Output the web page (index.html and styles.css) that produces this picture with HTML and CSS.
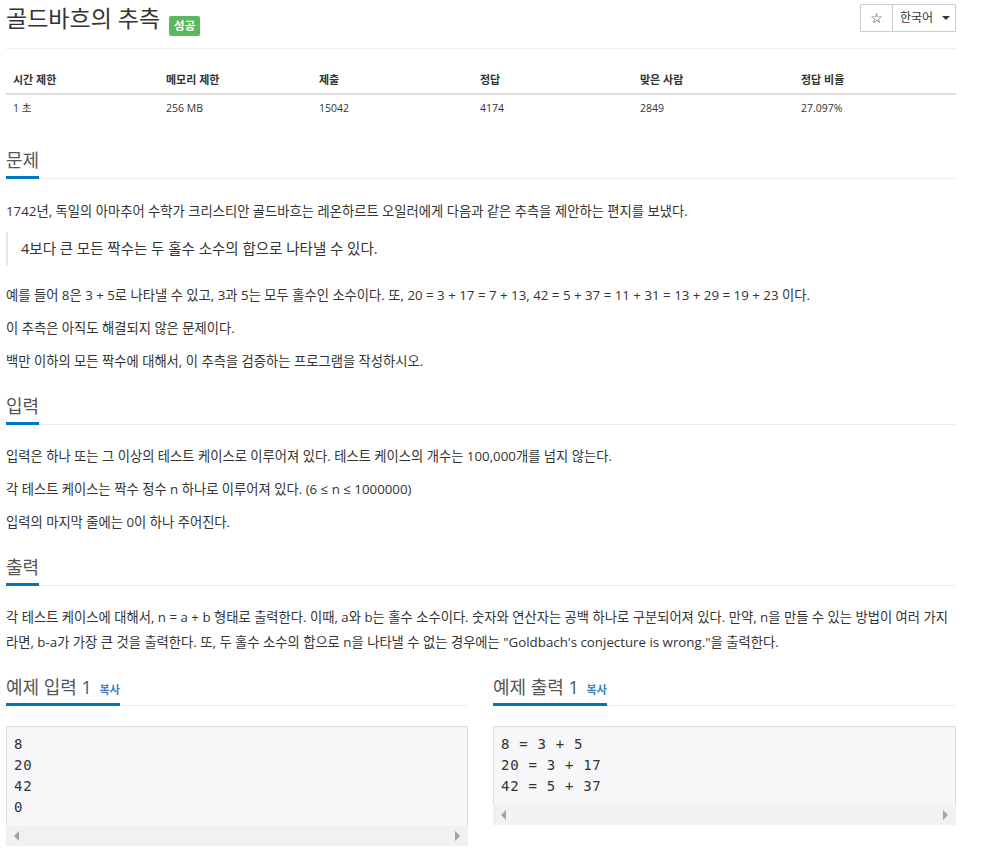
FILE: index.html
```html
<!DOCTYPE html>
<html lang="ko">
<head>
<meta charset="utf-8">
<title>골드바흐의 추측</title>
<link rel="stylesheet" href="styles.css">
</head>
<body>
<div class="page">
  <header class="page-header">
    <h1 class="title">골드바흐의 추측 <span class="badge">성공</span></h1>
    <div class="btn-group">
      <button class="btn btn-star" type="button">☆</button>
      <button class="btn btn-lang" type="button">한국어 <span class="caret"></span></button>
    </div>
  </header>

  <table class="info">
    <colgroup>
      <col class="w1"><col class="w2"><col class="w3"><col class="w4"><col class="w5"><col class="w6">
    </colgroup>
    <thead>
      <tr><th>시간 제한</th><th>메모리 제한</th><th>제출</th><th>정답</th><th>맞은 사람</th><th>정답 비율</th></tr>
    </thead>
    <tbody>
      <tr><td>1 초</td><td>256 MB</td><td>15042</td><td>4174</td><td>2849</td><td>27.097%</td></tr>
    </tbody>
  </table>

  <section class="section first">
    <div class="headline"><h2>문제</h2></div>
    <div class="desc">
      <p>1742년, 독일의 아마추어 수학가 크리스티안 골드바흐는 레온하르트 오일러에게 다음과 같은 추측을 제안하는 편지를 보냈다.</p>
      <blockquote>4보다 큰 모든 짝수는 두 홀수 소수의 합으로 나타낼 수 있다.</blockquote>
      <p>예를 들어 8은 3 + 5로 나타낼 수 있고, 3과 5는 모두 홀수인 소수이다. 또, 20 = 3 + 17 = 7 + 13, 42 = 5 + 37 = 11 + 31 = 13 + 29 = 19 + 23 이다.</p>
      <p>이 추측은 아직도 해결되지 않은 문제이다.</p>
      <p>백만 이하의 모든 짝수에 대해서, 이 추측을 검증하는 프로그램을 작성하시오.</p>
    </div>
  </section>

  <section class="section">
    <div class="headline"><h2>입력</h2></div>
    <div class="desc">
      <p>입력은 하나 또는 그 이상의 테스트 케이스로 이루어져 있다. 테스트 케이스의 개수는 100,000개를 넘지 않는다.</p>
      <p>각 테스트 케이스는 짝수 정수 n 하나로 이루어져 있다. (6 ≤ n ≤ 1000000)</p>
      <p>입력의 마지막 줄에는 0이 하나 주어진다.</p>
    </div>
  </section>

  <section class="section">
    <div class="headline"><h2>출력</h2></div>
    <div class="desc">
      <p><span class="nowrap">각 테스트 케이스에 대해서, n = a + b 형태로 출력한다. 이때, a와 b는 홀수 소수이다. 숫자와 연산자는 공백 하나로 구분되어져 있다. 만약, n을 만들 수 있는 방법이 여러 가지</span><br>라면, b-a가 가장 큰 것을 출력한다. 또, 두 홀수 소수의 합으로 n을 나타낼 수 없는 경우에는 "Goldbach's conjecture is wrong."을 출력한다.</p>
    </div>
  </section>

  <div class="samples">
    <section class="sample">
      <div class="headline"><h2>예제 입력 1 <span class="copy">복사</span></h2></div>
      <div class="pre-box">
        <pre class="code">8
20
42
0</pre>
        <div class="hscroll"><span class="arrow-left"></span><span class="arrow-right"></span></div>
      </div>
    </section>
    <section class="sample">
      <div class="headline"><h2>예제 출력 1 <span class="copy">복사</span></h2></div>
      <div class="pre-box">
        <pre class="code">8 = 3 + 5
20 = 3 + 17
42 = 5 + 37</pre>
        <div class="hscroll"><span class="arrow-left"></span><span class="arrow-right"></span></div>
      </div>
    </section>
  </div>
</div>
</body>
</html>
```

FILE: styles.css
```css
html, body {
  margin: 0;
  padding: 0;
  background: #fff;
}

body {
  font-family: "Open Sans", "Noto Sans CJK KR", sans-serif;
  font-size: 13.3px;
  line-height: 25px;
  color: #333;
}

.page {
  width: 950px;
  margin-left: 6px;
  display: flex;
  flex-direction: column;
}

/* header */
.page-header {
  display: flex;
  justify-content: space-between;
  align-items: flex-start;
  height: 44px;
  padding-top: 4px;
  border-bottom: 1px solid #eee;
}

.title {
  margin: 0;
  font-size: 23px;
  line-height: 29px;
  font-weight: normal;
  color: #333;
}

.badge {
  display: inline-block;
  margin-left: 3px;
  padding: 0 5px;
  height: 20px;
  line-height: 20px;
  font-size: 11.5px;
  font-weight: bold;
  color: #fff;
  background: #5cb85c;
  border-radius: 2px;
  vertical-align: -3px;
}

.btn-group {
  display: flex;
}

.btn {
  height: 28px;
  margin: 0;
  padding: 0;
  background: #fff;
  border: 1px solid #ccc;
  color: #333;
  font-family: "Open Sans", "Noto Sans CJK KR", sans-serif;
  font-size: 12px;
  line-height: 26px;
  display: flex;
  align-items: center;
  justify-content: center;
}

.btn-star {
  width: 33px;
  font-family: "DejaVu Sans", sans-serif;
  font-size: 14px;
  color: #222;
}

.btn-lang {
  width: 64px;
  margin-left: -1px;
  justify-content: flex-start;
  padding-left: 7px;
  gap: 9px;
}

.caret {
  display: inline-block;
  width: 0;
  height: 0;
  border-top: 4px solid #333;
  border-left: 4px solid transparent;
  border-right: 4px solid transparent;
}

/* info table */
.info {
  margin-top: 17px;
  width: 950px;
  table-layout: fixed;
  border-collapse: collapse;
  font-size: 10.5px;
  line-height: 15px;
}

.w1 { width: 153px; }
.w2 { width: 153px; }
.w3 { width: 161px; }
.w4 { width: 160px; }
.w5 { width: 161px; }
.w6 { width: 162px; }

.info th {
  text-align: left;
  font-weight: bold;
  font-size: 11px;
  padding: 6px 7px;
  border-bottom: 2px solid #ddd;
  color: #333;
}

.info td {
  padding: 6px 7px;
  color: #333;
}

/* sections */
.section {
  margin-top: 12px;
}

.section.first {
  margin-top: 26px;
}

.headline {
  display: flex;
  border-bottom: 1px dotted #d8d8d8;
}

.headline h2 {
  margin: 0 0 -1px;
  padding-bottom: 4px;
  font-size: 18px;
  line-height: 24px;
  font-weight: normal;
  color: #555;
  border-bottom: 3px solid #0076c0;
}

.desc {
  margin-top: 19px;
}

.section.first .desc {
  margin-top: 20px;
}

.desc p {
  margin: 0 0 8px;
}

.nowrap {
  white-space: nowrap;
}

blockquote {
  margin: 0 0 17px;
  padding: 5px 13px;
  border-left: 2px solid #e6e6e6;
  font-size: 14.5px;
  line-height: 24px;
  color: #333;
}

/* samples */
.samples {
  margin-top: 12px;
  display: grid;
  grid-template-columns: 462px 463px;
  column-gap: 25px;
}

.copy {
  margin-left: 3px;
  font-size: 11px;
  line-height: 1;
  font-weight: bold;
  color: #3b7fc4;
}

.pre-box {
  margin-top: 20px;
}

.code {
  margin: 0;
  padding: 7px 7px 8px;
  background: #f7f7f9;
  border: 1px solid #ddd;
  border-bottom: none;
  font-family: "DejaVu Sans Mono", monospace;
  font-size: 14px;
  line-height: 21px;
  letter-spacing: 0.7px;
  color: #333;
}

.hscroll {
  height: 20px;
  background: #f1f1f1;
  display: flex;
  align-items: center;
  justify-content: space-between;
  padding: 0 8px;
}

.arrow-left {
  width: 0;
  height: 0;
  border-top: 5px solid transparent;
  border-bottom: 5px solid transparent;
  border-right: 5px solid #a3a3a3;
}

.arrow-right {
  width: 0;
  height: 0;
  border-top: 5px solid transparent;
  border-bottom: 5px solid transparent;
  border-left: 5px solid #a3a3a3;
}
```
